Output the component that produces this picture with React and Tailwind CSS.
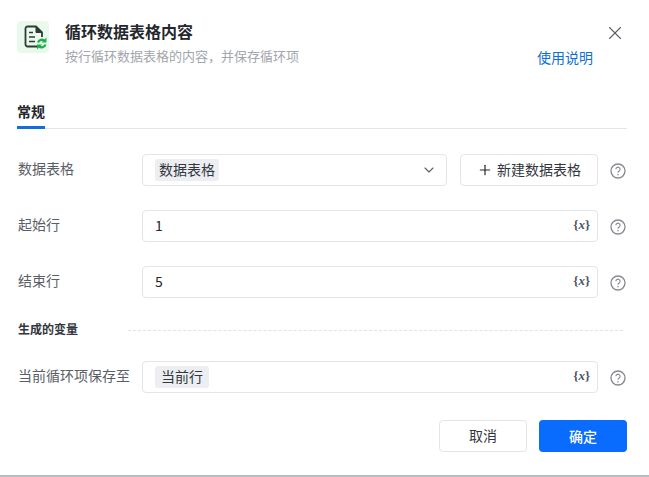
import React from 'react';
import { X, ChevronDown, Plus } from 'lucide-react';

const font = { fontFamily: '"Noto Sans CJK SC", "Liberation Sans", sans-serif' };

// 表格图标 + 绿色循环箭头
const SheetIcon = () => (
  <svg width="24" height="26" viewBox="0 0 24 26" fill="none" className="ml-[3px] mt-[2px]">
    <path d="M14 21.5H4.5a2 2 0 0 1-2-2V3.5a2 2 0 0 1 2-2H13l6 6V12" stroke="#2f3a36" strokeWidth="1.8" strokeLinejoin="round" />
    <path d="M13 1.5V7.5H19Z" fill="#2f3a36" stroke="#2f3a36" strokeWidth="1" strokeLinejoin="round" />
    <path d="M6 7.5H10M6 12H12M6 16.5H12" stroke="#2f3a36" strokeWidth="1.7" />
    <path d="M15 17.5a4 4 0 0 1 6.6-1.6" stroke="#1fad4e" strokeWidth="2.3" />
    <path d="M23.5 12.5V17.5h-5Z" fill="#1fad4e" />
    <path d="M22.5 19.5a4 4 0 0 1-6.6 1.6" stroke="#1fad4e" strokeWidth="2.3" />
    <path d="M14 24.5V19.5h5Z" fill="#1fad4e" />
  </svg>
);

const HelpIcon = () => (
  <svg width="16" height="16" viewBox="0 0 16 16" fill="none" className="shrink-0">
    <circle cx="8" cy="8" r="7" stroke="#85888f" strokeWidth="1.3" />
    <path d="M5.9 6.3a2.1 2.1 0 1 1 3.3 1.7c-.8.5-1.2.9-1.2 1.8" stroke="#85888f" strokeWidth="1.1" />
    <circle cx="8" cy="11.8" r=".75" fill="#85888f" />
  </svg>
);

const VarIcon = () => (
  <span className="absolute right-[7px] top-[7px] text-[13px] leading-none font-bold text-[#4a5260]" style={{ fontFamily: '"Liberation Serif", serif' }}>
    {'{'}<i>x</i>{'}'}
  </span>
);

const Tag = ({ children, className = 'px-[4px]' }) => (
  <span className={`inline-flex h-[22px] items-center rounded-[3px] bg-[#eceef2] pb-[2px] text-[14px] text-[#33373d] ${className}`}>{children}</span>
);

const Row = ({ label, children, className = '' }) => (
  <div className={`flex h-8 items-center ${className}`}>
    <div className="w-[125px] shrink-0 pb-[4px] pl-[1px] text-[14px] text-[#5a5e66]">{label}</div>
    <div className="flex flex-1 items-center">{children}</div>
    <div className="ml-[12px] mr-[2px] flex w-[16px] justify-center pt-[2px]"><HelpIcon /></div>
  </div>
);

const VarInput = ({ children }) => (
  <div className="relative flex h-8 w-[456px] items-center rounded-[4px] border border-[#e3e5e9] bg-white pl-[12px] text-[14px] text-[#24272c]">
    {children}
    <VarIcon />
  </div>
);

export default function App() {
  return (
    <div className="flex h-[477px] w-[649px] flex-col border-b-2 border-[#b9bdc2] bg-white" style={font}>
      <div className="flex pl-[17px] pr-[23px] pt-[21px]">
        <div className="flex h-8 w-8 items-center justify-center rounded-[4px] bg-[#e9faec]"><SheetIcon /></div>
        <div className="ml-4 flex-1">
          <div className="mt-[-1px] text-[16px] leading-[22px] font-bold text-[#24272c]">循环数据表格内容</div>
          <div className="mt-[4px] text-[13px] leading-[19px] text-[#a3a6ad]">按行循环数据表格的内容，并保存循环项</div>
        </div>
        <div className="flex flex-col items-end">
          <X size={22} strokeWidth={1.2} className="mt-[1px] text-[#5c6068]" />
          <div className="mr-[33px] mt-[4px] text-[14px] leading-[19px] text-[#0e6fd8]">使用说明</div>
        </div>
      </div>

      <div className="mx-[17px] mt-[34px] w-[610px] border-b border-[#e3e5e9]">
        <div className="mb-[-1px] w-[28px] border-b-[3px] border-[#0f6fe0] pb-[5px] text-[14px] leading-[20px] font-bold text-[#24272c]">常规</div>
      </div>

      <div className="px-[17px] pt-[25px]">
        <div className="w-[610px]">
          <Row label="数据表格">
            <div className="flex h-8 w-[305px] items-center justify-between rounded-[4px] border border-[#e3e5e9] pl-[12px] pr-[9px]">
              <Tag>数据表格</Tag>
              <ChevronDown size={16} strokeWidth={1.7} className="text-[#5c6068]" />
            </div>
            <div className="ml-[13px] flex h-8 w-[138px] items-center justify-center rounded-[4px] border border-[#e3e5e9] pb-[2px] text-[14px] text-[#33373d]">
              <Plus size={16} strokeWidth={1.8} className="mr-[4px] mt-[2px] text-[#24272c]" />新建数据表格
            </div>
          </Row>
          <Row label="起始行" className="mt-6"><VarInput><span className="pb-[2px]">1</span></VarInput></Row>
          <Row label="结束行" className="mt-6"><VarInput><span className="pb-[2px]">5</span></VarInput></Row>

          <div className="mt-[22px] flex h-5 items-center pl-[1px]">
            <span className="mt-[-2px] w-[110px] text-[12px] font-bold text-[#33373d]">生成的变量</span>
            <div className="w-[495px] border-t border-dashed border-[#e0e2e6]" />
          </div>

          <Row label="当前循环项保存至" className="mt-[21px]"><VarInput><Tag className="px-[6px]">当前行</Tag></VarInput></Row>

          <div className="mt-[27px] flex justify-end gap-3">
            <div className="flex h-8 w-[88px] items-center justify-center rounded-[4px] border border-[#e3e5e9] pb-[2px] text-[14px] text-[#33373d]">取消</div>
            <div className="flex h-8 w-[88px] items-center justify-center rounded-[4px] bg-[#0a6cff] text-[14px] font-medium text-white">确定</div>
          </div>
        </div>
      </div>
    </div>
  );
}
